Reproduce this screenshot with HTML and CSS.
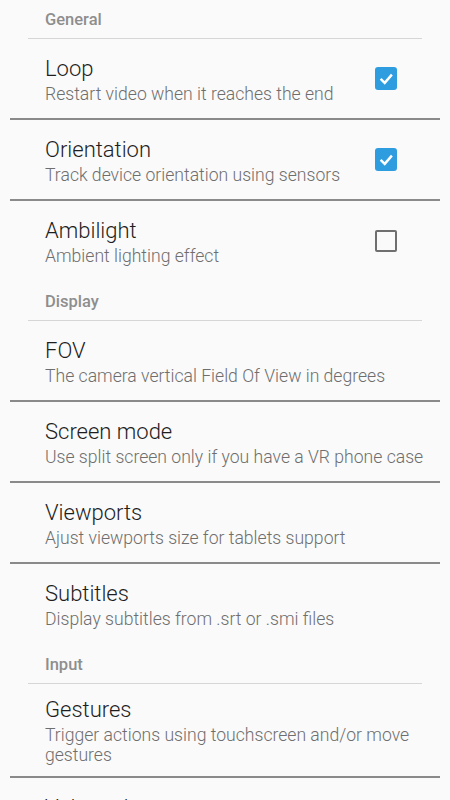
FILE: index.html
```html
<!DOCTYPE html>
<html lang="en">
<head>
    <meta charset="UTF-8">
    <meta name="viewport" content="width=device-width, initial-scale=1.0">
    <title>Settings</title>
    <link rel="stylesheet" href="styles.css">
</head>
<body>
    <div class="settings">
        <!-- General -->
        <div class="category">General</div>
        <div class="pref">
            <div class="pref-text">
                <div class="pref-title">Loop</div>
                <div class="pref-summary">Restart video when it reaches the end</div>
            </div>
            <span class="checkbox checked">
                <svg viewBox="0 0 22 22"><polyline points="5.5,11.5 9.5,15.5 16.5,7.5"/></svg>
            </span>
        </div>
        <div class="pref">
            <div class="pref-text">
                <div class="pref-title">Orientation</div>
                <div class="pref-summary">Track device orientation using sensors</div>
            </div>
            <span class="checkbox checked">
                <svg viewBox="0 0 22 22"><polyline points="5.5,11.5 9.5,15.5 16.5,7.5"/></svg>
            </span>
        </div>
        <div class="pref last">
            <div class="pref-text">
                <div class="pref-title">Ambilight</div>
                <div class="pref-summary">Ambient lighting effect</div>
            </div>
            <span class="checkbox"></span>
        </div>

        <!-- Display -->
        <div class="category">Display</div>
        <div class="pref">
            <div class="pref-text">
                <div class="pref-title">FOV</div>
                <div class="pref-summary">The camera vertical Field Of View in degrees</div>
            </div>
        </div>
        <div class="pref">
            <div class="pref-text">
                <div class="pref-title">Screen mode</div>
                <div class="pref-summary">Use split screen only if you have a VR phone case</div>
            </div>
        </div>
        <div class="pref">
            <div class="pref-text">
                <div class="pref-title">Viewports</div>
                <div class="pref-summary">Ajust viewports size for tablets support</div>
            </div>
        </div>
        <div class="pref last">
            <div class="pref-text">
                <div class="pref-title">Subtitles</div>
                <div class="pref-summary">Display subtitles from .srt or .smi files</div>
            </div>
        </div>

        <!-- Input -->
        <div class="category">Input</div>
        <div class="pref">
            <div class="pref-text">
                <div class="pref-title">Gestures</div>
                <div class="pref-summary">Trigger actions using touchscreen and/or move gestures</div>
            </div>
        </div>
        <div class="pref">
            <div class="pref-text">
                <div class="pref-title">Volume keys</div>
                <div class="pref-summary">Use volume keys to control playback</div>
            </div>
        </div>
    </div>
</body>
</html>
```

FILE: styles.css
```css
body {
    margin: 0;
    padding: 0;
    background-color: #fafafa;
    font-family: Roboto, "Noto Sans", sans-serif;
    overflow: hidden;
}

.settings {
    display: flex;
    flex-direction: column;
}

/* category header with thin line under it */
.category {
    height: 38px;
    margin: 0 28px;
    padding-left: 17px;
    display: flex;
    align-items: center;
    border-bottom: 1px solid #d6d6d6;
    font-size: 16.5px;
    font-weight: 500;
    color: #8e8e8e;
}

.pref {
    min-height: 57px;
    margin: 0 10px;
    padding: 11px 43px 11px 35px;
    display: flex;
    align-items: center;
    gap: 16px;
    border-bottom: 2px solid #8a8a8a;
}

.pref.last {
    border-bottom-color: transparent;
}

.pref-text {
    flex: 1;
    margin-right: -32px;
}

.pref-title {
    font-size: 22px;
    line-height: 30px;
    font-weight: 300;
    color: #1e1e1e;
}

.pref-summary {
    font-size: 17.6px;
    line-height: 20px;
    font-weight: 300;
    color: #6e6e6e;
}

.checkbox {
    width: 18px;
    height: 18px;
    border: 2.5px solid #6f6f6f;
    border-radius: 2px;
    flex-shrink: 0;
}

.checkbox.checked {
    width: 22.5px;
    height: 22.5px;
    border: none;
    border-radius: 3px;
    background-color: #2e9de0;
}

.checkbox svg {
    display: block;
    width: 100%;
    height: 100%;
}

.checkbox polyline {
    fill: none;
    stroke: #fff;
    stroke-width: 2.4;
}
```
